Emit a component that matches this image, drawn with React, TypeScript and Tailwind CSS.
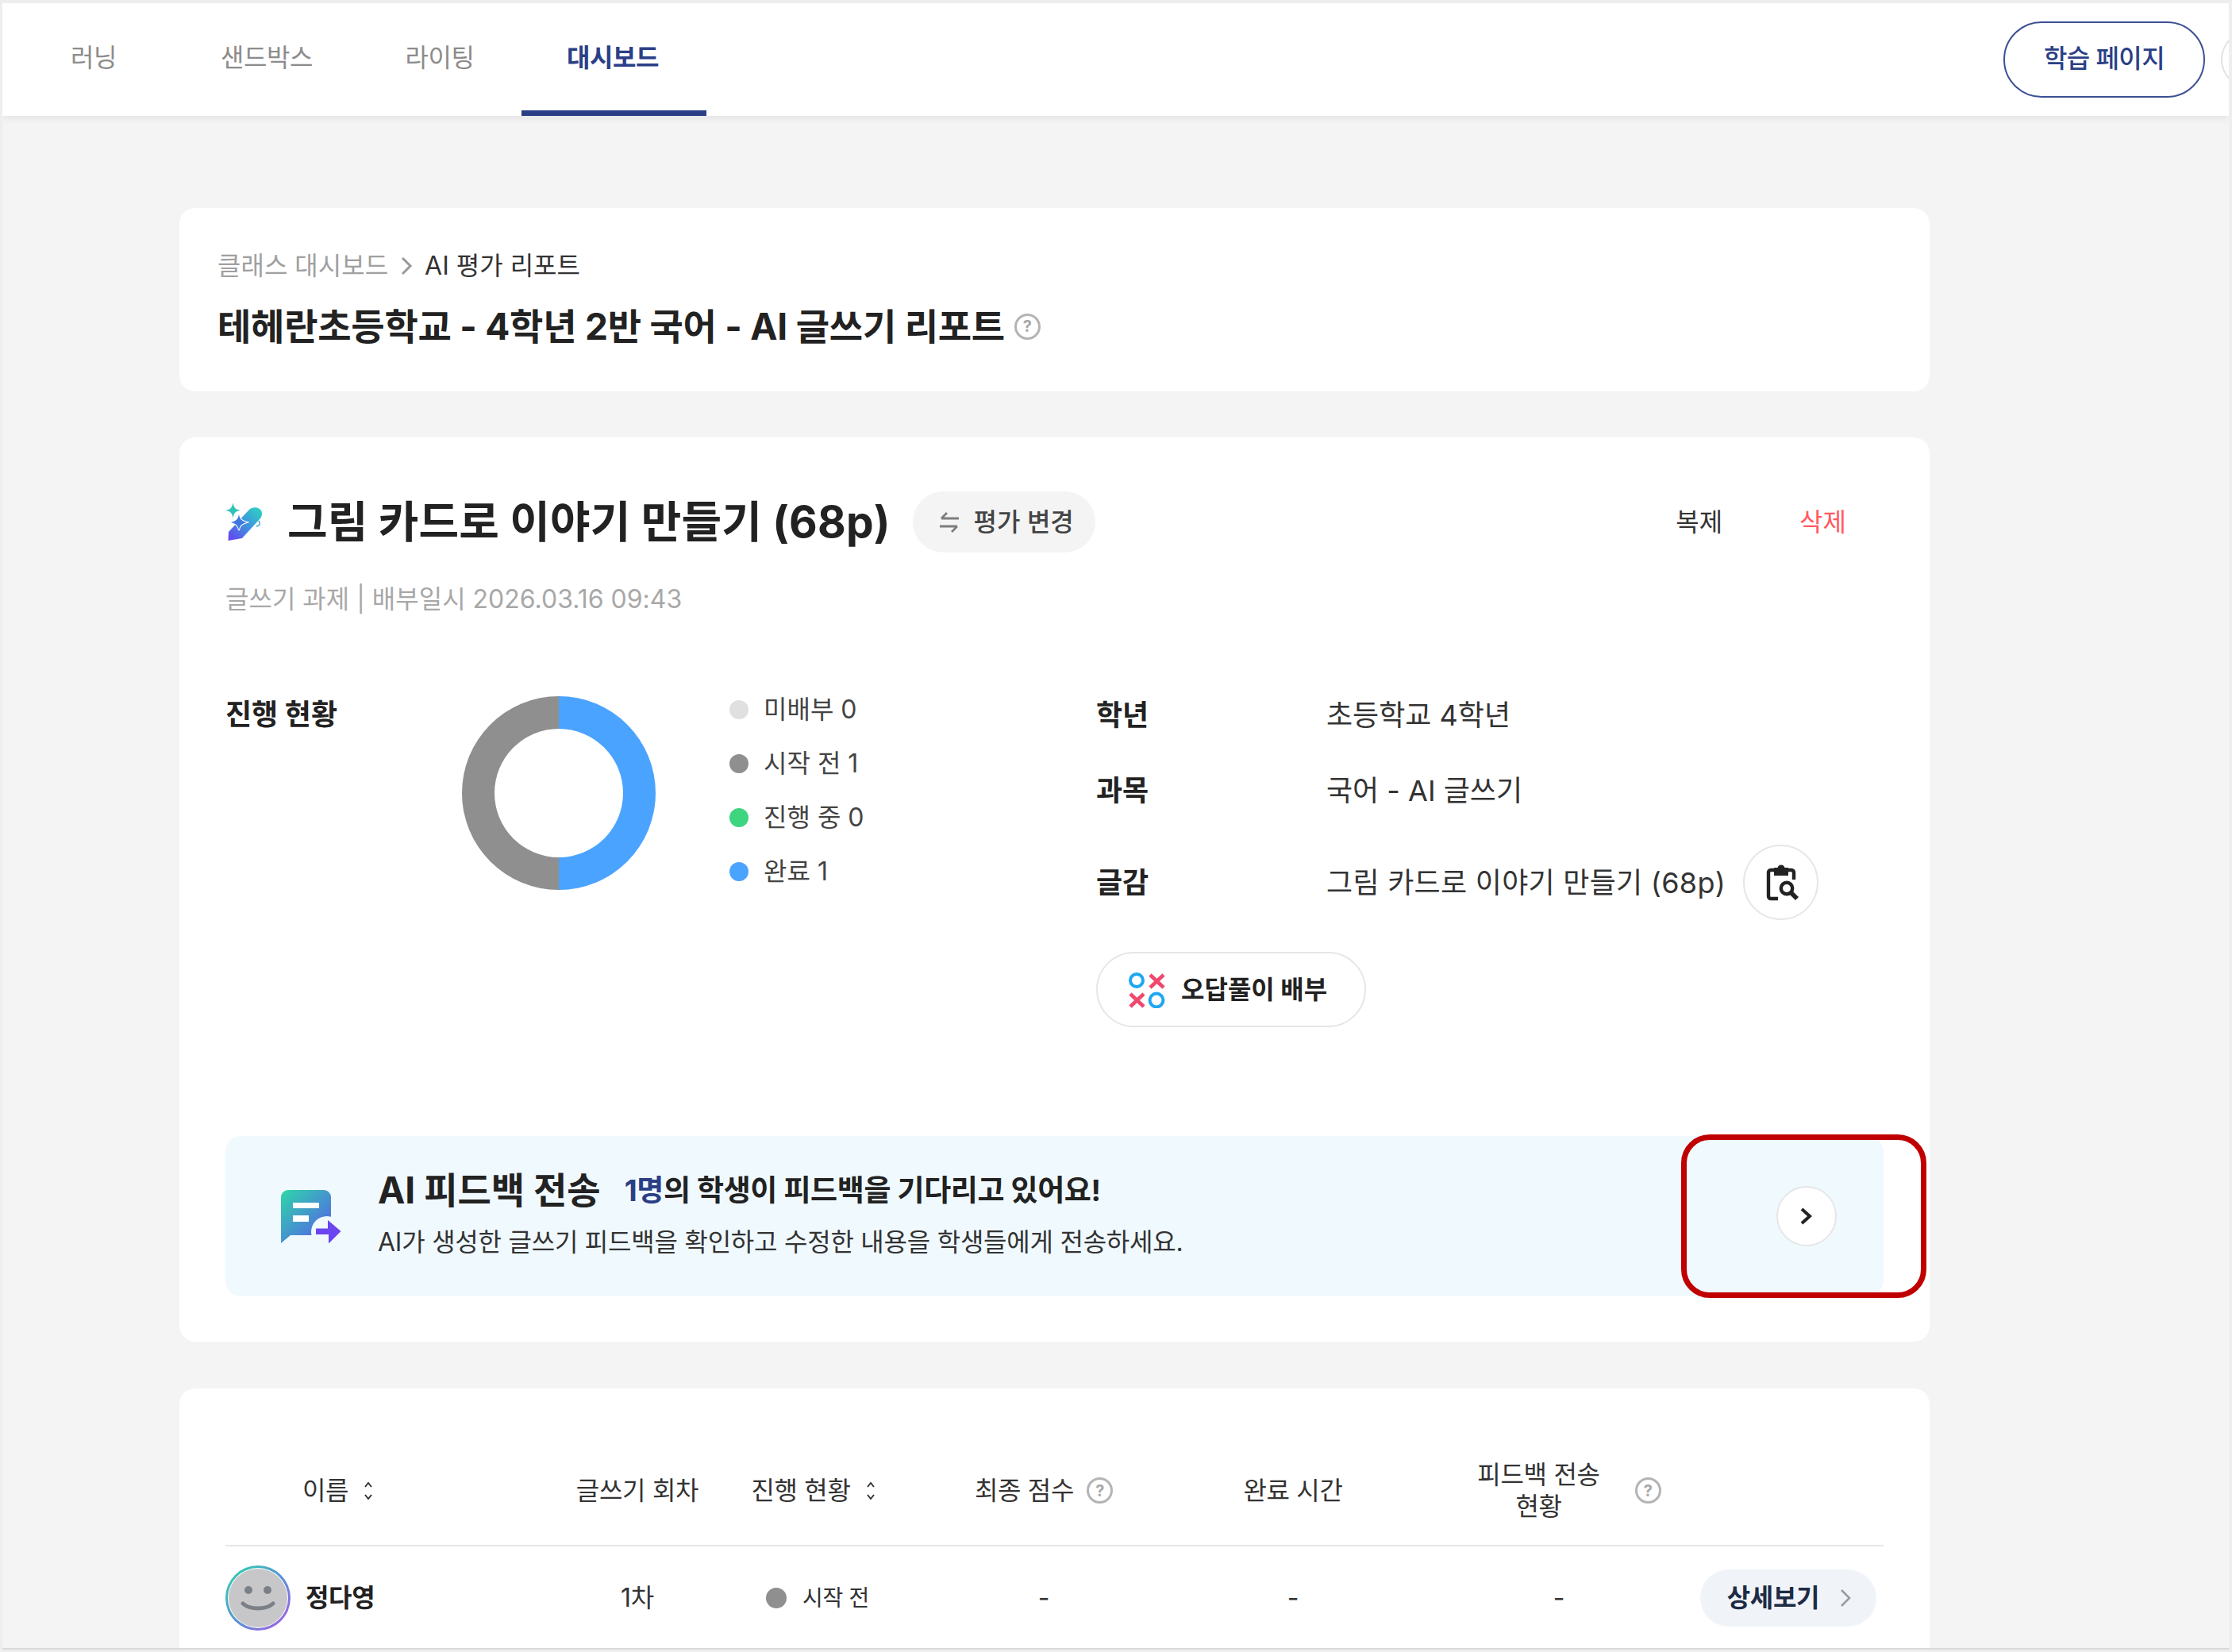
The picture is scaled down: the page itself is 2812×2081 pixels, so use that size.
import React from 'react';

const HelpIcon = ({ className = '' }: { className?: string }) => (
  <span className={`inline-flex items-center justify-center w-[33px] h-[33px] rounded-full border-[3px] border-[#b4b4b4] text-[#a8a8a8] text-[20px] font-bold leading-none ${className}`}>?</span>
);

const SortIcon = () => (
  <svg width="14" height="26" viewBox="0 0 14 26" fill="none" stroke="#333" strokeWidth="2" className="ml-[18px]">
    <path d="M3 8l4-5 4 5M3 18l4 5 4-5" />
  </svg>
);

const PenIcon = () => (
  <svg width="48" height="48" viewBox="16 24 48 48">
    <defs>
      <linearGradient id="pen" x1="60" y1="30" x2="20" y2="72" gradientUnits="userSpaceOnUse">
        <stop offset="0" stopColor="#2fd3c0" />
        <stop offset="0.5" stopColor="#3f8fe0" />
        <stop offset="1" stopColor="#6a3df2" />
      </linearGradient>
    </defs>
    <path d="M19.5 71L20 60L45 33C48 29 55 28 59 31C63 34 63 39 60 43L37 68Z" fill="url(#pen)" />
    <path d="M58 46C60 49 60 52 55 53" fill="none" stroke="#2f9fd0" strokeWidth="1.4" />
    <path d="M25.5 23C26.5 29 28.5 32 35 33C28.5 34 26.5 36 25.5 43C24.5 36 22.5 34 16 33C22.5 32 24.5 29 25.5 23Z" fill="#2fc4b8" />
    <path d="M33 38C34 44 36 46 43 48C36 50 34 52 33 58C32 52 30 50 23 48C30 46 32 44 33 38Z" fill="#3d78e0" stroke="#fff" strokeWidth="2" paintOrder="stroke" />
  </svg>
);

const SwapIcon = () => (
  <svg width="26" height="28" viewBox="0 0 26 28" fill="none" stroke="#7d7d7d" strokeWidth="2.8">
    <path d="M25 9H3M10 2L3 9M1 19H23M16 26L23 19" />
  </svg>
);

const ClipboardSearch = () => (
  <svg width="48" height="48" viewBox="0 0 24 24" fill="none" stroke="#222" strokeWidth="2.2">
    <path d="M8 4H5.5A1.5 1.5 0 0 0 4 5.5V20.5A1.5 1.5 0 0 0 5.5 22H10" />
    <path d="M16 4H18.5A1.5 1.5 0 0 1 20 5.5V10" />
    <path d="M8 3H10.2A1.8 1.8 0 0 1 13.8 3H16V7H8Z" fill="#222" strokeWidth="1" />
    <circle cx="15.5" cy="15.5" r="3.6" />
    <path d="M18.2 18.2L22 22" strokeWidth="2.8" />
  </svg>
);

const OxIcon = () => (
  <svg width="46" height="46" viewBox="22 14 46 46" fill="none">
    <circle cx="32" cy="25" r="8" stroke="#1fa6f2" strokeWidth="4" />
    <circle cx="57" cy="50" r="8.4" stroke="#1fa6f2" strokeWidth="4" />
    <path d="M49 18L66 34M66 18L49 34M24 42L41 58M41 42L24 58" stroke="#f0486c" strokeWidth="4.6" />
  </svg>
);

const SendIcon = () => (
  <svg width="76" height="67" viewBox="15 20 76 67">
    <defs>
      <linearGradient id="bubble" x1="15" y1="20" x2="80" y2="85" gradientUnits="userSpaceOnUse">
        <stop offset="0" stopColor="#2dd8a8" />
        <stop offset="1" stopColor="#5a55f0" />
      </linearGradient>
    </defs>
    <path d="M24 20H69A9 9 0 0 1 78 29V77H27L15 87V29A9 9 0 0 1 24 20Z" fill="url(#bubble)" />
    <path d="M30 36H63V43H30ZM30 52H50V60H30Z" fill="#fff" />
    <circle cx="73" cy="73" r="20" fill="#f0f9fe" />
    <path d="M59 68.5H74V58L90.5 72L75 87.5V76H59Z" fill="#6a45f0" />
  </svg>
);

const Smiley = () => (
  <svg width="46" height="34" viewBox="0 0 46 34" fill="none">
    <circle cx="11" cy="7" r="5" fill="#7b8088" />
    <circle cx="35" cy="7" r="5" fill="#7b8088" />
    <path d="M4 24C13 32 33 32 42 24" stroke="#7b8088" strokeWidth="5" strokeLinecap="round" />
  </svg>
);

const legend = [
  { color: 'bg-[#e0e0e0]', label: '미배부 0' },
  { color: 'bg-[#8f8f8f]', label: '시작 전 1' },
  { color: 'bg-[#3dd57f]', label: '진행 중 0' },
  { color: 'bg-[#4aa3ff]', label: '완료 1' },
];

export default function App() {
  return (
    <div className="h-[2081px] w-full overflow-hidden bg-[#eeeeee] pt-[4px] pl-[3px] pr-[4px] pb-[3px] text-[#222] [font-family:Inter,'Noto_Sans_CJK_KR',sans-serif]">
      <div className="h-full overflow-hidden bg-[#f4f4f4] border-b-2 border-[#d9d9d9]">
        {/* Top nav */}
        <header className="relative z-10 flex h-[142px] items-center overflow-hidden bg-white shadow-[0_3px_10px_rgba(0,0,0,0.07)]">
          <nav className="flex h-full pl-[6px]">
            {['러닝', '샌드박스', '라이팅'].map((t) => (
              <div key={t} className="flex w-[218px] items-center justify-center pb-[4px] text-[32px] tracking-[-0.015em] text-[#8c8c8c]">{t}</div>
            ))}
            <div className="relative flex w-[218px] items-center justify-center pb-[4px] text-[32px] font-bold tracking-[-0.015em] text-[#2b3f86]">
              대시보드
              <span className="absolute bottom-0 -left-[6px] -right-[9px] h-[7px] bg-[#2b3f86]" />
            </div>
          </nav>
          <button className="ml-auto flex h-[96px] w-[254px] items-center justify-center rounded-full border-2 border-[#3c5093] pb-[2px] text-[32px] font-medium tracking-[-0.02em] text-[#2b3f86]">학습 페이지</button>
          <span className="ml-[20px] -mr-[70px] h-[72px] w-[80px] shrink-0 rounded-full border-2 border-[#e2e2e2]" />
        </header>

        <main className="pl-[223px] pt-[116px]">
          {/* Report title */}
          <section className="h-[231px] w-[2205px] rounded-[20px] bg-white pl-[48px] pt-[50px]">
            <div className="flex h-[46px] items-center text-[32px]">
              <span className="text-[#a0a0a0]">클래스 대시보드</span>
              <svg width="16" height="26" viewBox="0 0 16 26" fill="none" stroke="#999" strokeWidth="3" className="ml-[15px] mr-[15px]"><path d="M3 3l10 10L3 23" /></svg>
              <span className="text-[#333]">AI 평가 리포트</span>
            </div>
            <div className="mt-[24px] flex h-[58px] items-center">
              <h1 className="text-[46px] font-bold tracking-[-0.005em] text-[#222]">테헤란초등학교 - 4학년 2반 국어 - AI 글쓰기 리포트</h1>
              <HelpIcon className="ml-[12px]" />
            </div>
          </section>

          {/* Assignment */}
          <section className="relative mt-[58px] h-[1139px] w-[2205px] rounded-[20px] bg-white px-[58px] pt-[68px]">
            <div className="flex h-[77px] items-center">
              <PenIcon />
              <h2 className="ml-[30px] text-[55px] font-bold tracking-[0.003em]">그림 카드로 이야기 만들기 (68p)</h2>
              <button className="ml-[28px] flex h-[77px] w-[230px] items-center justify-center gap-[18px] rounded-full bg-[#f4f4f4] pl-[6px] text-[32px] font-medium text-[#444]">
                <SwapIcon />
                평가 변경
              </button>
              <div className="ml-auto flex gap-[97px] pr-[47px] text-[32px]">
                <span className="text-[#333]">복제</span>
                <span className="text-[#ff5a5f]">삭제</span>
              </div>
            </div>
            <p className="mt-[35px] h-[48px] text-[32px] leading-[48px] text-[#a8a8a8]">글쓰기 과제 | 배부일시 2026.03.16 09:43</p>

            <div className="mt-[98px] flex h-[427px]">
              <div className="flex w-[1097px]">
                <div className="w-[298px] pt-[1px] text-[36px] leading-[44px] font-bold">진행 현황</div>
                <div className="relative h-[244px] w-[244px] rounded-full bg-[linear-gradient(90deg,#8f8f8f_50%,#4aa3ff_50%)]">
                  <div className="absolute left-[41px] top-[41px] h-[162px] w-[162px] rounded-full bg-white" />
                </div>
                <div className="ml-[93px] flex flex-col gap-[28px] -mt-[3px]">
                  {legend.map((l) => (
                    <div key={l.label} className="flex h-[40px] items-center gap-[19px] text-[32px] text-[#444]">
                      <span className={`h-[24px] w-[24px] rounded-full ${l.color}`} />
                      {l.label}
                    </div>
                  ))}
                </div>
              </div>
              <div className="flex-1 pt-[2px]">
                <div className="flex h-[44px] items-center">
                  <span className="w-[290px] text-[36px] font-bold">학년</span>
                  <span className="text-[36px] text-[#333]">초등학교 4학년</span>
                </div>
                <div className="mt-[51px] flex h-[44px] items-center">
                  <span className="w-[290px] text-[36px] font-bold">과목</span>
                  <span className="text-[36px] text-[#333]">국어 - AI 글쓰기</span>
                </div>
                <div className="mt-[46px] flex h-[95px] items-center">
                  <span className="w-[290px] text-[36px] font-bold">글감</span>
                  <span className="text-[36px] tracking-[0.0075em] text-[#333]">그림 카드로 이야기 만들기 (68p)</span>
                  <button className="ml-[22px] flex h-[95px] w-[95px] items-center justify-center rounded-full border-2 border-[#e6e6e6]"><ClipboardSearch /></button>
                </div>
                <button className="mt-[40px] flex h-[95px] w-[340px] items-center rounded-full border-2 border-[#e6e6e6] pl-[39px] text-[32px] font-bold">
                  <OxIcon />
                  <span className="ml-[20px]">오답풀이 배부</span>
                </button>
              </div>
            </div>

            {/* Feedback banner */}
            <div className="mt-[127px] flex h-[202px] items-center rounded-[20px] bg-[#f0f9fe] pl-[70px] pr-[59px]">
              <SendIcon />
              <div className="ml-[46px] pb-[7px]">
                <div className="flex h-[62px] items-center font-bold">
                  <span className="text-[46px]">AI 피드백 전송</span>
                  <span className="ml-[30px] text-[37px] tracking-[-0.01em]"><span className="text-[#2b3f86]">1명</span>의 학생이 피드백을 기다리고 있어요!</span>
                </div>
                <p className="mt-[10px] text-[32px] tracking-[-0.0075em] text-[#333]">AI가 생성한 글쓰기 피드백을 확인하고 수정한 내용을 학생들에게 전송하세요.</p>
              </div>
              <button className="ml-auto flex h-[76px] w-[76px] items-center justify-center rounded-full border-2 border-[#e6e6e6] bg-white">
                <svg width="20" height="26" viewBox="0 0 20 26" fill="none" stroke="#222" strokeWidth="4"><path d="M4 4l10 9-10 9" /></svg>
              </button>
            </div>

            {/* Annotation */}
            <div className="absolute left-[1892px] top-[878px] h-[206px] w-[309px] rounded-[36px] border-[7px] border-[#c00000]" />
          </section>

          {/* Student table */}
          <section className="mt-[59px] h-[400px] w-[2205px] rounded-[20px] bg-white px-[58px] pt-[60px]">
            <div className="grid h-[139px] grid-cols-[422px_194px_260px_310px_318px_352px_233px] items-center border-b-2 border-[#e6e6e6] text-[32px] tracking-[-0.01em] text-[#333]">
              <div className="flex items-center pl-[97px]">이름<SortIcon /></div>
              <div className="text-center">글쓰기 회차</div>
              <div className="flex items-center justify-center pr-[10px]">진행 현황<SortIcon /></div>
              <div className="flex items-center justify-center gap-[16px]">최종 점수<HelpIcon /></div>
              <div className="text-center">완료 시간</div>
              <div className="flex items-center justify-center gap-[44px] pl-[26px]">
                <span className="text-center leading-[40px]">피드백 전송<br />현황</span>
                <HelpIcon />
              </div>
              <div />
            </div>
            <div className="grid h-[129px] grid-cols-[422px_194px_260px_310px_318px_352px_233px] items-center text-[32px] tracking-[-0.01em] text-[#333]">
              <div className="flex items-center gap-[19px]">
                <div className="h-[82px] w-[82px] rounded-full bg-[linear-gradient(135deg,#2fd8a8,#5b8fd8_55%,#b455e8)] p-[3px]">
                  <div className="h-full w-full rounded-full bg-white p-[1px]">
                    <div className="flex h-full w-full items-center justify-center rounded-full bg-[#c7c7c9]"><Smiley /></div>
                  </div>
                </div>
                <span className="font-bold text-[#222]">정다영</span>
              </div>
              <div className="text-center">1차</div>
              <div className="flex items-center justify-center gap-[20px] text-[28px]">
                <span className="h-[26px] w-[26px] rounded-full bg-[#8f8f8f]" />
                시작 전
              </div>
              <div className="text-center">-</div>
              <div className="text-center">-</div>
              <div className="text-center">-</div>
              <div className="flex justify-end pr-[9px]">
                <button className="flex h-[72px] w-[222px] items-center justify-center gap-[26px] rounded-full bg-[#f0f4f9] pl-[2px] text-[32px] font-bold text-[#1d2b44]">
                  상세보기
                  <svg width="14" height="24" viewBox="0 0 14 24" fill="none" stroke="#9a9a9a" strokeWidth="2.5"><path d="M2 2l10 10L2 22" /></svg>
                </button>
              </div>
            </div>
          </section>
        </main>
      </div>
    </div>
  );
}
